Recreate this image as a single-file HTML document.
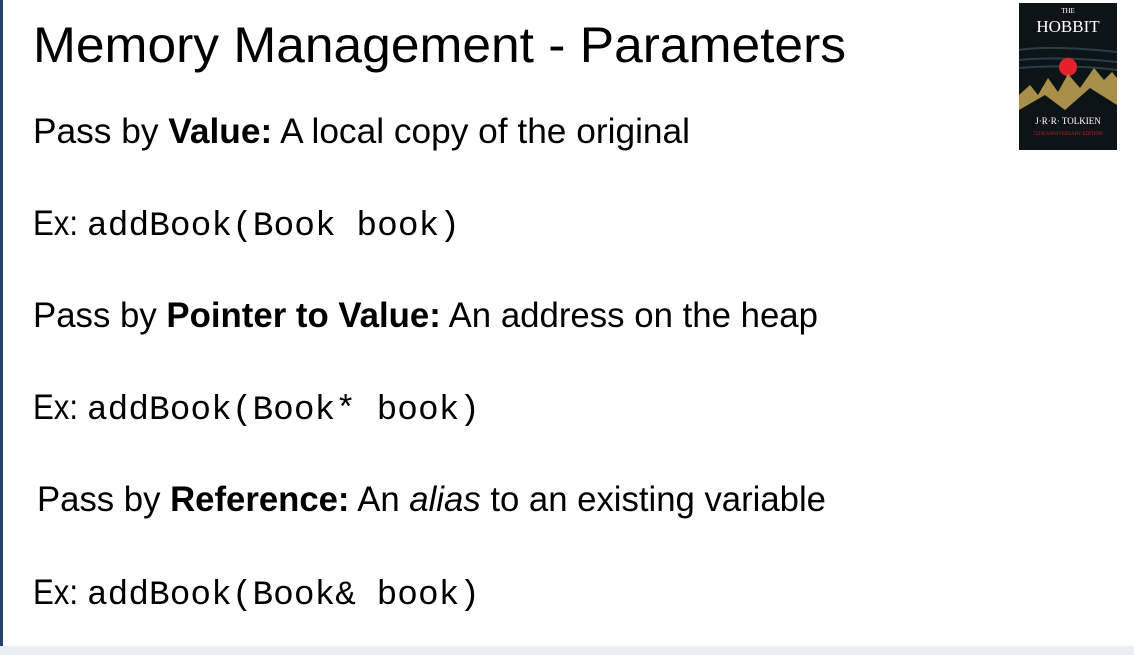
<!DOCTYPE html>
<html><head><meta charset="utf-8"><style>
html,body{margin:0;padding:0;width:1134px;height:655px;overflow:hidden;background:#fff}
</style></head><body>
<svg width="1134" height="655" xmlns="http://www.w3.org/2000/svg" style="display:block">
<rect x="0" y="0" width="1134" height="655" fill="#fff"/>
<rect x="0" y="0" width="3" height="646" fill="#2b3f6b"/>
<rect x="0" y="646" width="1134" height="9" fill="#e9eef2"/>
<g font-family="Liberation Sans, sans-serif" fill="#000">
<text x="33" y="62" font-size="50" textLength="813" lengthAdjust="spacingAndGlyphs">Memory Management - Parameters</text>
<text x="33" y="143" font-size="35" textLength="657" lengthAdjust="spacingAndGlyphs">Pass by <tspan font-weight="bold">Value:</tspan> A local copy of the original</text>
<text x="33" y="235" font-size="35" textLength="45" lengthAdjust="spacingAndGlyphs">Ex:</text>
<text x="87" y="235" font-family="Liberation Mono, monospace" font-size="34" textLength="373" lengthAdjust="spacingAndGlyphs">addBook(Book book)</text>
<text x="33" y="327" font-size="35" textLength="785" lengthAdjust="spacingAndGlyphs">Pass by <tspan font-weight="bold">Pointer to Value:</tspan> An address on the heap</text>
<text x="33" y="419" font-size="35" textLength="45" lengthAdjust="spacingAndGlyphs">Ex:</text>
<text x="87" y="419" font-family="Liberation Mono, monospace" font-size="34" textLength="393" lengthAdjust="spacingAndGlyphs">addBook(Book* book)</text>
<text x="37" y="511" font-size="35" textLength="789" lengthAdjust="spacingAndGlyphs">Pass by <tspan font-weight="bold">Reference:</tspan> An <tspan font-style="italic">alias</tspan> to an existing variable</text>
<text x="33" y="604" font-size="35" textLength="45" lengthAdjust="spacingAndGlyphs">Ex:</text>
<text x="87" y="604" font-family="Liberation Mono, monospace" font-size="34" textLength="393" lengthAdjust="spacingAndGlyphs">addBook(Book&amp; book)</text>
</g>
<g>
<rect x="1019" y="3" width="98" height="147" fill="#0d1418"/>
<path d="M1019 50 Q1050 45 1117 52 M1019 60 Q1060 56 1117 62 M1019 68 Q1070 64 1117 70" stroke="#2a3e45" stroke-width="2" fill="none"/>
<text x="1068" y="13" font-family="Liberation Serif, serif" font-size="7" fill="#fff" text-anchor="middle">THE</text>
<text x="1068" y="32" font-family="Liberation Serif, serif" font-size="17" fill="#fff" text-anchor="middle">HOBBIT</text>
<circle cx="1068" cy="67" r="9" fill="#e5202a"/>
<path d="M1019 95 L1030 85 L1038 95 L1048 78 L1058 92 L1068 74 L1080 88 L1094 68 L1104 80 L1112 72 L1117 78 L1117 110 L1019 110 Z" fill="#a8904a"/>
<path d="M1019 110 L1045 95 L1065 110 L1090 88 L1117 105 L1117 112 L1019 112 Z" fill="#0d1418"/>
<text x="1068" y="124" font-family="Liberation Serif, serif" font-size="9" fill="#fff" text-anchor="middle">J·R·R· TOLKIEN</text>
<text x="1068" y="135" font-family="Liberation Serif, serif" font-size="5" fill="#d02020" text-anchor="middle">75TH ANNIVERSARY EDITION</text>
</g>
</svg>
</body></html>
